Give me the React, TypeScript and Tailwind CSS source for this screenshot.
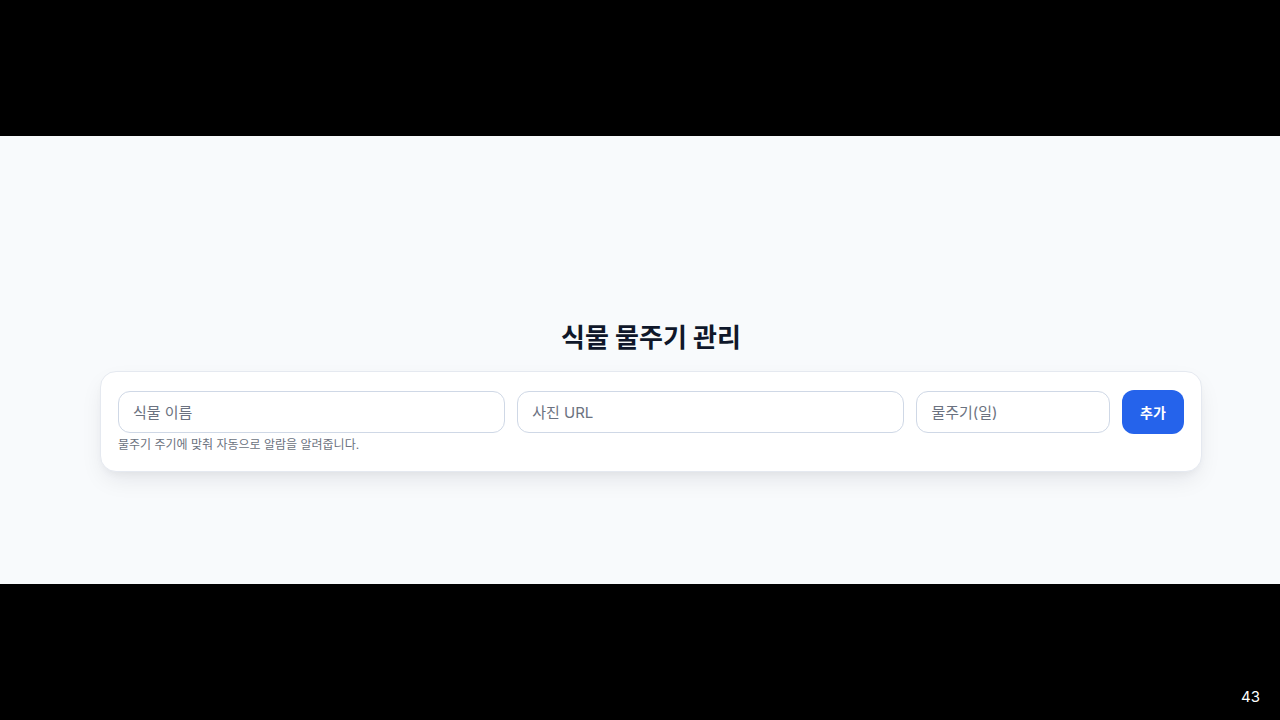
export default function App() {
  return (
    <div
      className="flex h-[720px] w-[1280px] flex-col bg-black"
      style={{ fontFamily: 'Inter, "Noto Sans CJK KR", sans-serif' }}
    >
      <div className="h-[136px] shrink-0 bg-black" />

      <main className="h-[448px] shrink-0 bg-[#f8fafc] pt-[185px]">
        <div className="ml-[100px] w-[1102px]">
          <h1 className="mb-[16px] text-center text-[26px] font-bold leading-[34px] text-[#0f172a]">
            식물 물주기 관리
          </h1>

          <div className="rounded-2xl border border-[#e5e9f0] bg-white px-[17px] pb-[17px] pt-[19px] shadow-[0_10px_25px_-5px_rgba(15,23,42,0.10),0_4px_10px_-4px_rgba(15,23,42,0.06)]">
            <div className="grid grid-cols-[minmax(0,2fr)_minmax(0,2fr)_minmax(0,1fr)_auto] items-start gap-[12px]">
              <div className="flex flex-col">
                <input
                  placeholder="식물 이름"
                  className="h-[42px] w-full rounded-xl border border-[#cfd8e6] px-[14px] text-[15px] text-[#111827] outline-none placeholder:text-[#6b7280]"
                />
                <p className="mt-[3px] text-[12px] leading-[18px] text-[#6b7280]">
                  물주기 주기에 맞춰 자동으로 알람을 알려줍니다.
                </p>
              </div>
              <input
                placeholder="사진 URL"
                className="h-[42px] w-full rounded-xl border border-[#cfd8e6] px-[14px] text-[15px] text-[#111827] outline-none placeholder:text-[#6b7280]"
              />
              <input
                placeholder="물주기(일)"
                className="h-[42px] w-full rounded-xl border border-[#cfd8e6] px-[14px] text-[15px] text-[#111827] outline-none placeholder:text-[#6b7280]"
              />
              <button className="-mt-[1px] h-[44px] w-[62px] rounded-xl bg-[#2563eb] text-[14px] font-bold text-white">
                추가
              </button>
            </div>
          </div>
        </div>
      </main>

      <div className="flex h-[136px] shrink-0 items-end justify-end bg-black pb-[12px] pr-[20px]">
        <span className="text-[15px] text-white">43</span>
      </div>
    </div>
  );
}
